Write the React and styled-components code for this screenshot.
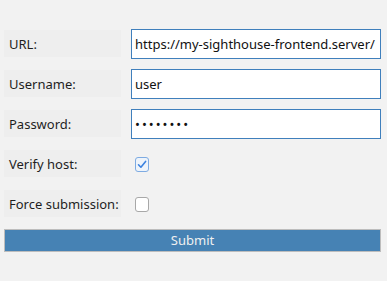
import styled, { createGlobalStyle } from 'styled-components';

const GlobalStyle = createGlobalStyle`
  html, body {
    margin: 0;
    padding: 0;
    background: #f2f2f2;
  }
  body {
    font-family: 'Noto Sans', 'DejaVu Sans', sans-serif;
    font-size: 13px;
    color: #1e1e1e;
  }
`;

const Form = styled.form`
  display: grid;
  grid-template-columns: 117px 250px;
  grid-auto-rows: 30px;
  column-gap: 10px;
  row-gap: 10px;
  padding: 29px 6px 0 4px;
`;

const Label = styled.label`
  display: flex;
  align-items: center;
  align-self: start;
  height: 27px;
  margin-top: 1px;
  padding-left: 5px;
  background: #eeeeee;
  white-space: nowrap;
`;

const Input = styled.input`
  box-sizing: border-box;
  width: 250px;
  height: 30px;
  margin: 0;
  padding: 0 0 1px 3px;
  border: 1px solid #3f7fbc;
  border-radius: 0;
  background: #ffffff;
  font-family: 'Noto Sans', 'DejaVu Sans', sans-serif;
  font-size: 13px;
  color: #111;
  outline: none;
  letter-spacing: ${(p) => (p.type === 'password' ? '2px' : '0')};
`;

const CheckCell = styled.div`
  display: flex;
  align-items: center;
  padding-left: 4px;
`;

const Box = styled.span`
  box-sizing: border-box;
  display: inline-flex;
  align-items: center;
  justify-content: center;
  width: 14px;
  height: 15px;
  border-radius: 3px;
  border: 1px solid ${(p) => (p.checked ? '#7eabe2' : '#a8a8a8')};
  background: ${(p) => (p.checked ? '#eef4fb' : '#ffffff')};
`;

const Submit = styled.button`
  grid-column: 1 / -1;
  box-sizing: border-box;
  height: 23px;
  margin: 0;
  padding: 0 0 1px;
  border: 1px solid #bdbdbd;
  background: #4682b4;
  color: #f0f0f0;
  font-family: 'Noto Sans', 'DejaVu Sans', sans-serif;
  font-size: 13px;
`;

const Check = ({ checked }) => (
  <Box checked={checked}>
    {checked && (
      <svg width="10" height="9" viewBox="0 0 10 9">
        <path d="M1.5 4.8 L3.9 7.2 L8.6 1.4" fill="none" stroke="#3b82e0" strokeWidth="1.6" strokeLinecap="round" strokeLinejoin="round" />
      </svg>
    )}
  </Box>
);

const App = () => (
  <>
    <GlobalStyle />
    <Form onSubmit={(e) => e.preventDefault()}>
      <Label>URL:</Label>
      <Input type="text" defaultValue="https://my-sighthouse-frontend.server/" />
      <Label>Username:</Label>
      <Input type="text" defaultValue="user" />
      <Label>Password:</Label>
      <Input type="password" defaultValue="password" />
      <Label>Verify host:</Label>
      <CheckCell>
        <Check checked />
      </CheckCell>
      <Label>Force submission:</Label>
      <CheckCell>
        <Check />
      </CheckCell>
      <Submit type="submit">Submit</Submit>
    </Form>
  </>
);

export default App;
